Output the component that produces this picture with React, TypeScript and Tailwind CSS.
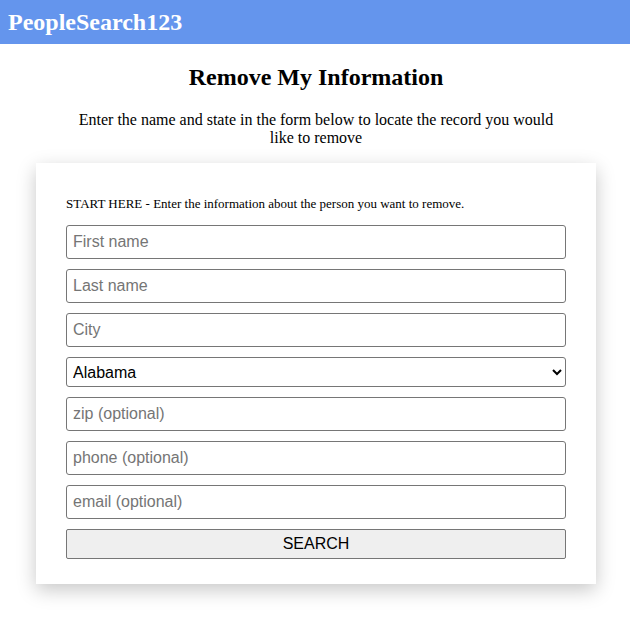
import React from "react";

const states = ["Alabama", "Alaska", "Arizona", "Arkansas", "California"];

const serif = { fontFamily: '"Liberation Serif", "Times New Roman", serif' };

export default function App() {
  const fields = ["First name", "Last name", "City"];
  const optional = ["zip (optional)", "phone (optional)", "email (optional)"];
  const inputClass =
    "block h-[34px] w-full rounded-[3px] border border-[#767676] bg-white px-[6px] text-[16px] text-black placeholder:text-[#757575] outline-none font-['Liberation_Sans',Arial,sans-serif]";

  return (
    <div className="min-h-[618px] bg-white font-['Liberation_Serif','Times_New_Roman',serif] text-black">
      <header className="flex h-[44px] items-center bg-[#6495ed] px-[8px]">
        <h1 className="text-[24px] font-bold leading-none text-white">PeopleSearch123</h1>
      </header>

      <div className="flex justify-center pl-[2px]">
        <main className="flex w-[560px] flex-col items-center">
          <h2 className="mt-[19px] text-[24px] font-bold leading-[28px]">Remove My Information</h2>
          <p className="mt-[20px] w-[500px] text-center text-[16px] leading-[18px]">
            Enter the name and state in the form below to locate the record you would like to remove
          </p>

          <form
            className="mt-[16px] w-full bg-white px-[30px] pb-[25px] pt-[33px] shadow-[0_6px_18px_rgba(0,0,0,0.22)]"
            onSubmit={(e) => e.preventDefault()}
          >
            <p className="mb-[14px] text-[13px] leading-[15px]" style={serif}>
              START HERE - Enter the information about the person you want to remove.
            </p>
            <div className="flex flex-col gap-[10px]">
              {fields.map((f) => (
                <input key={f} type="text" placeholder={f} className={inputClass} />
              ))}
              <select
                defaultValue="Alabama"
                className="block h-[30px] w-full appearance-auto rounded-[3px] border border-[#767676] bg-white px-[2px] text-[16px] text-black font-['Liberation_Sans',Arial,sans-serif]"
              >
                {states.map((s) => (
                  <option key={s}>{s}</option>
                ))}
              </select>
              {optional.map((f) => (
                <input key={f} type="text" placeholder={f} className={inputClass} />
              ))}
              <button
                type="submit"
                className="block h-[30px] w-full rounded-[2px] border border-[#767676] bg-[#efefef] text-[16px] text-black font-['Liberation_Sans',Arial,sans-serif]"
              >
                SEARCH
              </button>
            </div>
          </form>
        </main>
      </div>
    </div>
  );
}
